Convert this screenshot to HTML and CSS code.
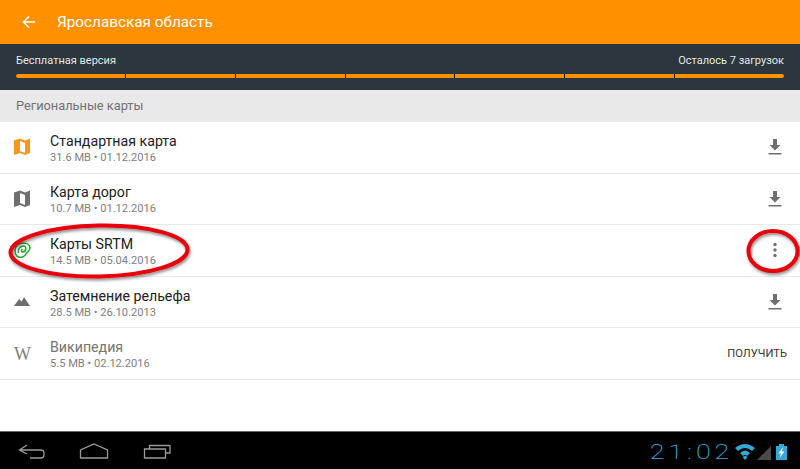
FILE: index.html
```html
<!DOCTYPE html>
<html>
	<head>
		<meta charset="utf-8" />
		<link rel="stylesheet" href="styles.css">
	</head>

	<body>
		<header class="toolbar">
			<svg class="back" width="14" height="14" viewBox="0 0 14 14"><path d="M13 7H2M7 1.500 1.500 7 7 12.500" fill="none" stroke="#fff" stroke-width="1.600"/></svg>
			<span class="title">Ярославская область</span>
		</header>

		<section class="quota">
			<div class="quota-text">
				<span>Бесплатная версия</span>
				<span>Осталось 7 загрузок</span>
			</div>
			<div class="quota-bar">
				<i></i><i></i><i></i><i></i><i></i><i></i><i></i>
			</div>
		</section>

		<div class="section-head">Региональные карты</div>

		<main class="list">
			<div class="row">
				<svg class="icon" width="18" height="18" viewBox="0 0 18 18"><path fill-rule="evenodd" d="M0 2.500 6 .5 11 2.500 16 .5V15L11 17 6 15 0 17ZM6 3V13L11 15V5Z" fill="#f7981d"/></svg>
				<div class="info">
					<div class="name">Стандартная карта</div>
					<div class="meta">31.6 MB • 01.12.2016</div>
				</div>
				<svg class="action" width="14" height="16" viewBox="0 0 14 16"><path d="M5 0h4v6h3.500L7 11.500 1.500 6H5zM.5 14h13v1.400H.5z" fill="#6f6f6f"/></svg>
			</div>
			<div class="row">
				<svg class="icon" width="18" height="18" viewBox="0 0 18 18"><path fill-rule="evenodd" d="M0 2.500 6 .5 11 2.500 16 .5V15L11 17 6 15 0 17ZM6 3V13L11 15V5Z" fill="#6f6f6f"/></svg>
				<div class="info">
					<div class="name">Карта дорог</div>
					<div class="meta">10.7 MB • 01.12.2016</div>
				</div>
				<svg class="action" width="14" height="16" viewBox="0 0 14 16"><path d="M5 0h4v6h3.500L7 11.500 1.500 6H5zM.5 14h13v1.400H.5z" fill="#6f6f6f"/></svg>
			</div>
			<div class="row">
				<svg class="icon" width="18" height="18" viewBox="0 0 18 18"><path d="M1 9C1 5 5 2 9 2 13 2 16 4 16 7 16 10 13 11 12 13 10.500 16 7 17 5 16 2 15.500 1 12 1 9ZM4.500 12C3.500 8 7 4.500 10 5 13 5.500 12 10.500 9 11 7.500 11.200 7 9 8.500 8" fill="none" stroke="#22a52a" stroke-width="1.500"/></svg>
				<div class="info">
					<div class="name">Карты SRTM</div>
					<div class="meta">14.5 MB • 05.04.2016</div>
				</div>
				<svg class="action" width="14" height="16" viewBox="0 0 14 16"><circle cx="7" cy="2.500" r="1.700" fill="#6f6f6f"/><circle cx="7" cy="8" r="1.700" fill="#6f6f6f"/><circle cx="7" cy="13.500" r="1.700" fill="#6f6f6f"/></svg>
			</div>
			<div class="row">
				<svg class="icon" width="18" height="18" viewBox="0 0 18 18"><path d="M0 13 5 6 7.500 8.500 10 4 16 13z" fill="#6f6f6f"/></svg>
				<div class="info">
					<div class="name">Затемнение рельефа</div>
					<div class="meta">28.5 MB • 26.10.2013</div>
				</div>
				<svg class="action" width="14" height="16" viewBox="0 0 14 16"><path d="M5 0h4v6h3.500L7 11.500 1.500 6H5zM.5 14h13v1.400H.5z" fill="#6f6f6f"/></svg>
			</div>
			<div class="row row-muted">
				<span class="icon icon-w">W</span>
				<div class="info">
					<div class="name">Википедия</div>
					<div class="meta">5.5 MB • 02.12.2016</div>
				</div>
				<span class="get">ПОЛУЧИТЬ</span>
			</div>
		</main>

		<footer class="navbar">
			<svg class="nav-buttons" width="172" height="20" viewBox="0 0 172 20">
				<path d="M27 2 19.500 7 27 11M20 7H41Q44 7 44 10V12Q44 15 41 15H30M80.500 15V7L94 1 107.500 7V15H80ZM144.500 6H165.500V15H144.500ZM149.500 6V2.500H170.500M170 2.500V10H166" fill="none" stroke="#9a9a9a" stroke-width="1.300"/>
			</svg>
			<div class="tray">
				<span class="clock">21:02</span>
				<svg width="54" height="18" viewBox="0 0 54 18">
					<path d="M0 5Q10-3 20 5L17 8Q10 2 3 8ZM5 10Q10 5 15 10L12 13Q10 11 8 13ZM10 17 7.500 14Q10 12 12.500 14Z" fill="#33a7d8"/>
					<path d="M22 17 36 3V17Z" fill="#4a4a4a"/>
					<path d="M41 3H44V1H49V3H52V17H41Z" fill="#33a7d8"/>
					<path d="M48 4 43.500 10.500H46L44.500 15 49.500 8.500H47Z" fill="#fff"/>
				</svg>
			</div>
		</footer>

		<svg class="marks" width="800" height="469" viewBox="0 0 800 469">
			<defs>
				<filter id="mark-shadow" x="-10%" y="-20%" width="120%" height="150%">
					<feDropShadow dx="1" dy="2" stdDeviation="1.500" flood-color="#000" flood-opacity="0.45"/>
				</filter>
			</defs>
			<g fill="none" stroke="#e8000b" stroke-width="4" filter="url(#mark-shadow)">
				<ellipse cx="99" cy="251" rx="88.500" ry="25.500" transform="rotate(-1 99 251)"/>
				<ellipse cx="773" cy="251" rx="24.500" ry="20"/>
			</g>
		</svg>
	</body>
</html>
```

FILE: styles.css
```css
body {
	margin: 0;
	width: 800px;
	height: 469px;
	overflow: hidden;
	position: relative;
	display: flex;
	flex-direction: column;
	background: #fff;
	font-family: Roboto, "Noto Sans", sans-serif;
}

/* Top bar */
.toolbar {
	height: 44px;
	flex: none;
	display: flex;
	align-items: center;
	padding-left: 22px;
	background: #ff9100;
	color: #fff;
}

.back {
	margin-right: 21px;
}

.title {
	font-size: 15.300px;
}

/* Free version counter */
.quota {
	height: 46px;
	flex: none;
	box-sizing: border-box;
	padding: 10px 16px 0;
	background: #2c373d;
	color: #e4e6e7;
	font-size: 11px;
}

.quota-text {
	display: flex;
	justify-content: space-between;
	line-height: 14px;
}

.quota-bar {
	display: flex;
	gap: 1px;
	margin-top: 6px;
	height: 4px;
	background: #111;
	border-radius: 2px;
}

.quota-bar i {
	flex: 1;
	background: #ff9100;
}

.quota-bar i:first-child {
	border-radius: 2px 0 0 2px;
}

.quota-bar i:last-child {
	border-radius: 0 2px 2px 0;
}

.section-head {
	height: 32px;
	flex: none;
	box-sizing: border-box;
	padding-left: 16px;
	line-height: 32px;
	background: #e9e9e9;
	color: #727272;
	font-size: 12.800px;
}

/* Map list */
.list {
	flex: 1;
}

.row {
	height: 51.600px;
	box-sizing: border-box;
	display: flex;
	align-items: center;
	padding: 0 18px 0 14px;
	border-bottom: 1px solid #e8e8e8;
}

.icon {
	width: 18px;
	flex: none;
	margin-right: 18px;
}

.icon-w {
	padding-top: 1px;
	font-family: "Liberation Serif", serif;
	font-size: 18px;
	color: #808080;
}

.info {
	flex: 1;
	padding-top: 3px;
}

.name {
	font-size: 14.200px;
	line-height: 17px;
	color: #212121;
}

.meta {
	margin-top: 1px;
	font-size: 11.100px;
	line-height: 14px;
	color: #808080;
}

.row-muted .name {
	color: #757575;
}

.get {
	margin-right: -5px;
	font-size: 11.200px;
	color: #333;
}

/* System bar */
.navbar {
	height: 37px;
	flex: none;
	display: flex;
	align-items: center;
	justify-content: space-between;
	padding-right: 11px;
	border-top: 1px solid #666;
	background: #000;
}

.nav-buttons {
	margin-top: 5px;
}

.tray {
	display: flex;
	align-items: center;
	gap: 2px;
	margin-top: 2px;
}

.clock {
	font-size: 21px;
	font-weight: 200;
	letter-spacing: 3px;
	color: #33a7d8;
	transform: scaleX(1.280);
	transform-origin: right center;
}

/* Hand drawn red marks over the list */
.marks {
	position: absolute;
	left: 0;
	top: 0;
	pointer-events: none;
}
```
